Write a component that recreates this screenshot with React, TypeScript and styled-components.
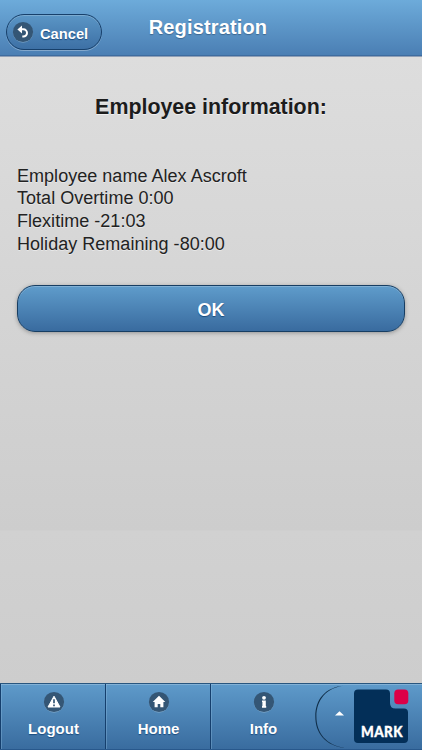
import React from "react";
import styled, { createGlobalStyle } from "styled-components";

const GlobalStyle = createGlobalStyle`
  * { box-sizing: border-box; }
  body { margin: 0; font-family: "Liberation Sans", Arial, sans-serif; }
`;

const Screen = styled.div`
  width: 422px;
  height: 750px;
  display: flex;
  flex-direction: column;
  overflow: hidden;
  background: linear-gradient(#dddddd 56px, #cdcdcd 530px, #d1d1d1 531px, #cdcdcd 684px);
`;

const Header = styled.header`
  height: 57px;
  flex: none;
  display: grid;
  grid-template-columns: 108px 1fr 120px;
  padding-left: 6px;
  background: linear-gradient(#6dabda, #4a7eb3);
  border-bottom: 1px solid #8f9fb6;
  box-shadow: inset 0 -1px #3e6c9f;
`;

const CancelButton = styled.button`
  margin: 14px 0 0;
  padding: 0 0 0 5px;
  width: 96px;
  height: 36px;
  display: flex;
  align-items: center;
  gap: 6px;
  border: 1px solid #17406b;
  border-radius: 18px;
  background: linear-gradient(#5b96c6, #3d70a5);
  box-shadow: inset 0 1px rgba(255, 255, 255, 0.2), 0 1px rgba(255, 255, 255, 0.3);
  color: #fff;
  font: bold 14.7px "Liberation Sans", Arial, sans-serif;
  text-shadow: 0 1px 1px #194b7e;
`;

const CancelLabel = styled.span`
  padding-top: 3px;
`;

const Title = styled.h1`
  margin: 15px 0 0;
  color: #fff;
  font-size: 20px;
  line-height: 24px;
  letter-spacing: 0.15px;
  text-align: center;
  white-space: nowrap;
  text-shadow: 0 1px 1px #3e6790;
`;

const Content = styled.main`
  flex: 1;
  padding: 0 17px;
  color: #1c1c1c;
`;

const Heading = styled.h2`
  margin: 37px 0 0;
  font-size: 21.4px;
  line-height: 26px;
  text-align: center;
  text-shadow: 0 1px #f0f0f0;
`;

const Details = styled.div`
  margin-top: 44.8px;
  font-size: 18px;
  line-height: 22.6px;
  letter-spacing: 0.03px;
  color: #222;
  text-shadow: 0 1px #e8e8e8;
`;

const DetailLine = styled.div`
  white-space: nowrap;
`;

const OkButton = styled.button`
  display: block;
  width: 388px;
  height: 47px;
  margin: 29.8px 0 0;
  padding: 4px 0 0;
  border: 1px solid #173e63;
  border-radius: 18px;
  background: linear-gradient(#5f9ccb, #396b9f);
  box-shadow: inset 0 1px rgba(255, 255, 255, 0.22), 0 1px 4px rgba(0, 0, 0, 0.3);
  color: #fff;
  font: bold 18px "Liberation Sans", Arial, sans-serif;
  text-shadow: 0 1px 1px #194b7e;
`;

const Footer = styled.footer`
  flex: none;
  height: 67px;
  display: flex;
  border-top: 1px solid #28567f;
  border-bottom: 1px solid #28588c;
  background: linear-gradient(#5e9aca, #396c9f);
  box-shadow: inset 0 1px #82b1d6;
`;

const Tab = styled.a`
  width: 105px;
  height: 100%;
  padding: 7px 0 0 1px;
  display: flex;
  flex-direction: column;
  align-items: center;
  border-left: 1px solid #153f6d;
  box-shadow: inset 1px 0 rgba(150, 195, 230, 0.35);
  color: #fff;
`;

const TabLabel = styled.span`
  margin-top: 7px;
  font-size: 15px;
  line-height: 18px;
  font-weight: bold;
  text-shadow: 0 1px 1px #194b7e;
`;

const BrandPanel = styled.div`
  flex: 1;
  height: 100%;
`;

const Svg = styled.svg`
  display: block;
  flex: none;
`;

type Glyph = "back" | "alert" | "home" | "info";

function Disc({ glyph }: { glyph: Glyph }) {
  return (
    <Svg width="22" height="22" viewBox="0 0 22 22">
      <circle cx="11" cy="11.8" r="10" fill="#9bbbd5" opacity=".55" />
      <circle cx="11" cy="11" r="10.1" fill="#345675" />
      {glyph === "back" && (
        <>
          <path d="M9 8.3H11.4A3.6 3.6 0 0 1 11.4 15.5H10.3" fill="none" stroke="#fff" strokeWidth="2" />
          <path d="M5.4 8.5 10 4.6V12.4Z" fill="#fff" />
        </>
      )}
      {glyph === "alert" && (
        <>
          <path d="M11 5.2 17 16H5Z" fill="#fff" stroke="#fff" strokeWidth="1" strokeLinejoin="round" />
          <path d="M11 8.2V12.3M11 13.5V15.2" stroke="#345675" strokeWidth="1.7" />
        </>
      )}
      {glyph === "home" && (
        <path d="M11 4.8 17.3 11H15.4V16.3H12.3V13H9.7V16.3H6.6V11H4.7Z" fill="#fff" />
      )}
      {glyph === "info" && (
        <>
          <circle cx="11" cy="6.8" r="1.9" fill="#fff" />
          <path d="M9 9.4H12.8V15H13.2V16.8H9V15H9.4V11H9Z" fill="#fff" />
        </>
      )}
    </Svg>
  );
}

function Brand() {
  return (
    <Svg width="107" height="65" viewBox="0 0 107 65">
      <path
        d="M30 1.5C9.5 3 .3 16 .3 32.5S10.5 62.3 30 63.8C11.3 61.3 1.4 49 1.4 32.5S11.3 3.5 30 1.5Z"
        fill="#102e49"
      />
      <path d="M20 31.6 24.5 27.2 29 31.6Z" fill="#fff" />
      <path
        d="M43 5.5H71Q75 5.5 75 9.5V19Q75 24.5 80.5 24.5H89Q93 24.5 93 28.5V55Q93 59 89 59H43Q39 59 39 55V9.5Q39 5.5 43 5.5Z"
        fill="#032f58"
      />
      <rect x="79.3" y="5.5" width="14" height="14.7" rx="3.8" fill="#dc0048" />
      <text
        x="67"
        y="53"
        fill="#fff"
        stroke="#fff"
        strokeWidth=".35"
        fontFamily="Lato, sans-serif"
        fontSize="14.8"
        fontWeight="900"
        letterSpacing=".5"
        textAnchor="middle"
        textLength="42"
        lengthAdjust="spacingAndGlyphs"
      >
        MARK
      </text>
    </Svg>
  );
}

const details = [
  "Employee name Alex Ascroft",
  "Total Overtime 0:00",
  "Flexitime -21:03",
  "Holiday Remaining -80:00",
];

const tabs: { glyph: Glyph; label: string }[] = [
  { glyph: "alert", label: "Logout" },
  { glyph: "home", label: "Home" },
  { glyph: "info", label: "Info" },
];

export default function App() {
  return (
    <Screen>
      <GlobalStyle />
      <Header>
        <CancelButton>
          <Disc glyph="back" />
          <CancelLabel>Cancel</CancelLabel>
        </CancelButton>
        <Title>Registration</Title>
      </Header>
      <Content>
        <Heading>Employee information:</Heading>
        <Details>
          {details.map((line) => (
            <DetailLine key={line}>{line}</DetailLine>
          ))}
        </Details>
        <OkButton>OK</OkButton>
      </Content>
      <Footer>
        {tabs.map((tab) => (
          <Tab key={tab.label}>
            <Disc glyph={tab.glyph} />
            <TabLabel>{tab.label}</TabLabel>
          </Tab>
        ))}
        <BrandPanel>
          <Brand />
        </BrandPanel>
      </Footer>
    </Screen>
  );
}
